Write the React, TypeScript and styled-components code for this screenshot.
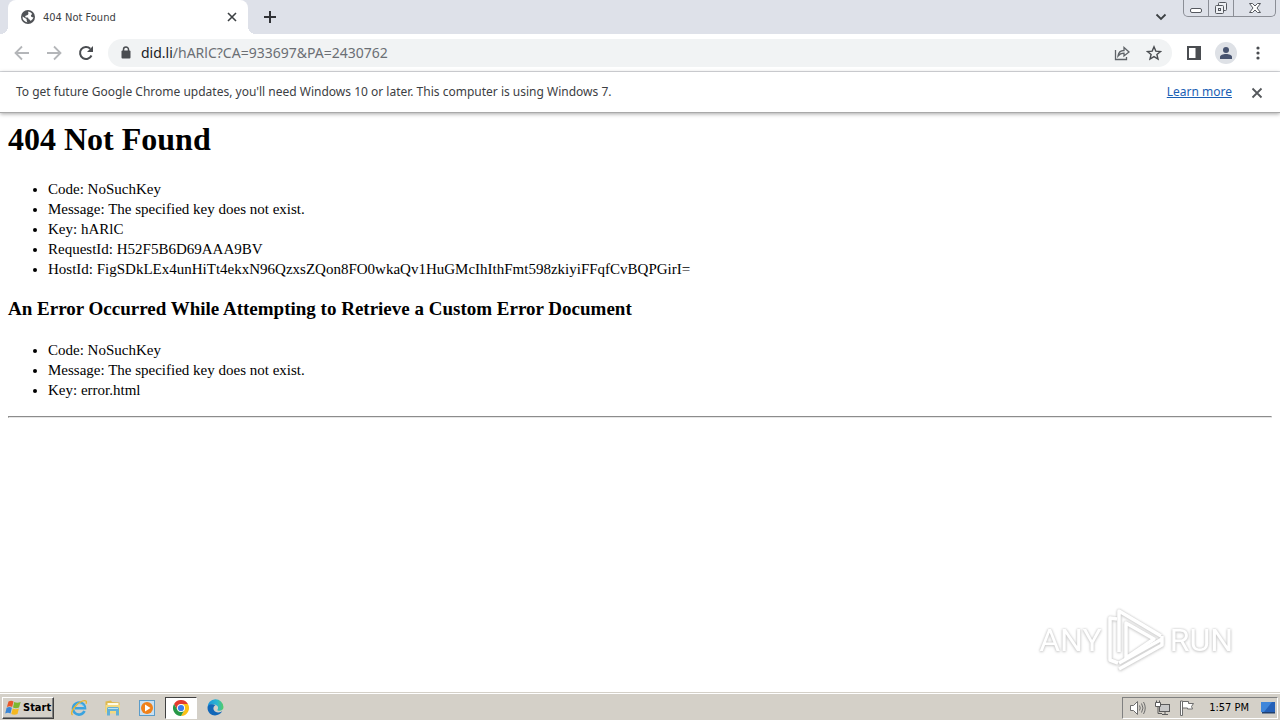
import React from 'react';
import styled, { createGlobalStyle, css } from 'styled-components';

const ui = '"Noto Sans", "DejaVu Sans Condensed", sans-serif';
const compact = '"DejaVu Sans Condensed", "DejaVu Sans", sans-serif';

const Global = createGlobalStyle`
  html, body, #root { height: 100%; }
  body { margin: 0; background: #fff; }
  *, *::before, *::after { box-sizing: border-box; }
  button { font: inherit; color: inherit; border: 0; padding: 0; background: none; }
  svg { display: block; flex: none; }
`;

const Desktop = styled.div`
  min-height: 100%;
  display: flex;
  flex-direction: column;
  font-family: ${ui};
`;

const TabStrip = styled.header`
  display: flex;
  height: 34px;
  padding-left: 8px;
  background: #dee1e9;
`;

const Tab = styled.div`
  position: relative;
  display: flex;
  align-items: center;
  gap: 8px;
  width: 240px;
  padding: 0 8px 0 13px;
  border-radius: 8px 8px 0 0;
  background: #fff;
  font-family: ${compact};
  font-size: 11px;
  color: #3c4043;
  &::before, &::after {
    content: '';
    position: absolute;
    bottom: 0;
    width: 8px;
    height: 8px;
  }
  &::before { left: -8px; background: radial-gradient(circle at 0 0, transparent 8px, #fff 8px); }
  &::after { right: -8px; background: radial-gradient(circle at 100% 0, transparent 8px, #fff 8px); }
`;

const TabTitle = styled.span`
  flex: 1;
`;

const IconButton = styled.button<{ $size?: number }>`
  display: grid;
  place-items: center;
  flex: none;
  width: ${p => p.$size ?? 16}px;
  height: ${p => p.$size ?? 16}px;
`;

const NewTab = styled(IconButton)`
  margin: 3px 0 0 8px;
`;

const StripEnd = styled.div`
  display: flex;
  align-items: flex-start;
  gap: 8px;
  margin-left: auto;
  padding-right: 4px;
`;

const TabSearch = styled(IconButton)`
  margin-top: 3px;
`;

const WindowButtons = styled.div`
  display: flex;
  height: 17px;
  border: 1px solid #8b8e96;
  border-top: 0;
  border-radius: 0 0 5px 5px;
`;

const WindowButton = styled.button<{ $width: number }>`
  display: grid;
  place-items: center;
  width: ${p => p.$width}px;
  & + & { border-left: 1px solid #8b8e96; }
`;

const Toolbar = styled.div`
  display: flex;
  align-items: center;
  height: 38px;
  padding: 0 10px;
  background: #fff;
  border-bottom: 1px solid #dadce0;
`;

const Group = styled.div`
  display: flex;
  gap: 8px;
`;

const AddressBar = styled.form`
  flex: 1;
  display: flex;
  align-items: center;
  gap: 7px;
  height: 28px;
  margin: 0 10px;
  padding: 0 6px 0 10px;
  border-radius: 14px;
  background: #f1f3f4;
`;

const Url = styled.span`
  flex: 1;
  font-size: 14px;
  line-height: 20px;
  color: #6b6f74;
`;

const Host = styled.span`
  color: #202124;
`;

const Avatar = styled.button`
  display: grid;
  place-items: center;
  width: 22px;
  height: 22px;
  border-radius: 50%;
  background: #dee1e6;
`;

const InfoBar = styled.section`
  position: relative;
  display: flex;
  align-items: center;
  height: 41px;
  padding: 0 16px;
  background: #fff;
  border-bottom: 1px solid #a9a9a9;
  box-shadow: 0 1px 4px rgba(0, 0, 0, 0.35);
  font-size: 12px;
  line-height: 16px;
  color: #3c4043;
`;

const InfoText = styled.span`
  flex: 1;
`;

const LearnMore = styled.a`
  margin-right: 16px;
  color: #1a5fb4;
  text-decoration: underline;
`;

const Page = styled.main`
  position: relative;
  flex: 1;
  padding: 8px;
  font-family: "Liberation Serif", serif;
  font-size: 15px;
  line-height: 20px;
  color: #000;
`;

const Title = styled.h1`
  margin: 0 0 21px;
  font-size: 32px;
  line-height: 37px;
`;

const Subtitle = styled.h3`
  margin: 19px 0 20px;
  font-size: 19px;
  line-height: 22px;
`;

const List = styled.ul`
  margin: 0;
  padding-left: 40px;
`;

const Rule = styled.hr`
  margin: 16px 0 0;
  border: 1px solid;
  border-color: #8c8c8c #e6e6e6 #e6e6e6 #8c8c8c;
`;

const Watermark = styled.div`
  position: absolute;
  right: 47px;
  bottom: 20px;
  display: flex;
  align-items: center;
  gap: 5px;
  font-family: Roboto, "Liberation Sans", sans-serif;
  font-size: 32px;
  line-height: 64px;
  color: #fff;
  filter: drop-shadow(0 0 1px #c4c4c4) drop-shadow(0 1px 1px #ddd);
`;

const Taskbar = styled.footer`
  display: flex;
  align-items: center;
  height: 28px;
  padding: 2px 2px 0;
  background: #d4d0c8;
  border-top: 1px solid #d4d0c8;
  box-shadow: inset 0 1px 0 #fff;
  font-family: ${compact};
  font-size: 11px;
  color: #000;
`;

const Start = styled.button`
  && {
    border: 1px solid;
    border-color: #fff #404040 #404040 #fff;
    padding: 0 2px;
    font-weight: 700;
  }
  display: flex;
  align-items: center;
  gap: 2px;
  height: 22px;
  margin-right: 9px;
  box-shadow: inset -1px -1px 0 #808080;
`;

const Task = styled.button<{ $active?: boolean }>`
  display: grid;
  place-items: center;
  width: 32px;
  height: 22px;
  margin-right: 2px;
  ${p => p.$active && css`
    && {
      background: #fff;
      border: 1px solid;
      border-color: #404040 #fff #fff #404040;
    }
  `}
`;

const Tray = styled.div`
  display: flex;
  align-items: center;
  gap: 8px;
  height: 22px;
  margin-left: auto;
  padding: 0 1px 0 6px;
  border: 1px solid;
  border-color: #808080 #fff #fff #808080;
`;

const Clock = styled.time`
  margin: 0 3px 0 6px;
`;

const Cross = ({ size = 16, color = '#3c4043' }: { size?: number; color?: string }) => (
  <svg width={size} height={size} viewBox="0 0 16 16">
    <path d="M4 4l8 8M12 4l-8 8" stroke={color} strokeWidth="1.6" />
  </svg>
);

const Arrow = ({ flip }: { flip?: boolean }) => (
  <svg width="16" height="16" viewBox="0 0 16 16" fill="none" stroke="#b4b6b9" strokeWidth="1.8">
    <path d={flip ? 'M1 8h13M8 1.5l6.5 6.5L8 14.5' : 'M15 8H2M8 1.5L1.5 8 8 14.5'} />
  </svg>
);

const WindowsFlag = () => (
  <svg width="16" height="16" viewBox="0 0 16 16">
    <path d="M3.500 1.500c2-1 3.500-1 5 0L7.200 7c-1.700-1-3.300-1-5.300 0z" fill="#e8572a" />
    <path d="M9.200 2c2 1 4 1 6.500 0L14 7.600c-2.200 1-4 1-6 0z" fill="#7db72f" />
    <path d="M1.600 7.800c2-1 3.600-1 5.300 0L5.500 13.500c-1.700-1-3.300-1-5.300 0z" fill="#3a86d6" />
    <path d="M7.700 8.400c2 1 4 1 6.200 0L12.500 14c-2.200 1-4.200 1-6.200 0z" fill="#f5b820" />
  </svg>
);

const Explorer = () => (
  <svg width="18" height="18" viewBox="0 0 18 18" fill="none">
    <path d="M14.500 12A6 6 0 1 1 15 9.300H5" stroke="#3ba3df" strokeWidth="2.600" />
    <path d="M14 8.200A5 5 0 0 0 5 7" stroke="#8dd3f5" strokeWidth="1" />
    <path d="M2.500 16C-.5 13.500 6 4.500 12.500 2c3.500-1.300 4.500.3 3.500 2.800" stroke="#e9b52c" strokeWidth="1.300" />
  </svg>
);

const Folder = () => (
  <svg width="18" height="18" viewBox="0 0 18 18">
    <path d="M1.500 2.500l5.500-1 1 1.500 7.500.5V13h-14z" fill="#dfb94e" />
    <path d="M3.500 4h11v3h-11z" fill="#fffbe4" />
    <path d="M1.500 6h14.500v8.500H1.500z" fill="#f3d980" />
    <path d="M3 9.500Q3 8 4.500 8h9Q15 8 15 9.500V16.500h-3V12H6v4.500H3z" fill="#63b0d6" />
    <path d="M4 9h10v1H4z" fill="#b9e2f2" />
  </svg>
);

const Player = () => (
  <svg width="18" height="18" viewBox="0 0 18 18">
    <rect x="1.500" y="1.500" width="15" height="15" fill="#c9e0f2" stroke="#5b9cc9" />
    <circle cx="9" cy="9" r="6" fill="#f0811a" />
    <path d="M7 5.500l5.500 3.500L7 12.500z" fill="#fff" />
  </svg>
);

const ChromeLogo = () => (
  <svg width="16" height="16" viewBox="0 0 16 16">
    <path d="M8 8V4h6.930A8 8 0 0 1 8 16l3.460-6z" fill="#fbc116" />
    <path d="M8 4h6.930A8 8 0 0 0 1.070 4L4.540 10 8 8z" fill="#e33b2e" />
    <path d="M1.070 4A8 8 0 0 0 8 16l3.460-6L8 8 4.540 10z" fill="#279847" />
    <circle cx="8" cy="8" r="4" fill="#fff" />
    <circle cx="8" cy="8" r="3.100" fill="#3b7ded" />
  </svg>
);

const EdgeLogo = () => (
  <svg width="17" height="17" viewBox="0 0 17 17">
    <defs>
      <linearGradient id="edgeTop" x1="0" x2="1"><stop stopColor="#1c93dc" /><stop offset="0.600" stopColor="#2bb5d0" /><stop offset="1" stopColor="#55ce62" /></linearGradient>
    </defs>
    <path d="M.5 8.500A8 8 0 0 1 16.500 8c0 2.500-1.800 3.800-4 3.800-1.800 0-2.600-.7-1.800-1.600C12 8.200 10 5.500 6.800 5.500 3.500 5.500.8 7.500.5 8.500z" fill="url(#edgeTop)" />
    <path d="M.5 8.500C1 5.500 5 4.300 8.500 6.200 5.500 7.500 5.200 13 11 13.500c2 .2 3.500-.8 4.200-1.200C12 18.500.5 18 .5 8.500z" fill="#1267b8" />
  </svg>
);

const Speaker = () => (
  <svg width="17" height="16" viewBox="0 0 17 16" fill="none" stroke="#6d6d6d">
    <path d="M1.500 5.500h3l4-4v13l-4-4h-3z" fill="#fff" />
    <path d="M10.500 5.500q1.500 2.500 0 5M12.500 3.500q3 4.500 0 9M14.500 2q3.500 6 0 12" />
  </svg>
);

const Network = () => (
  <svg width="17" height="16" viewBox="0 0 17 16" fill="#fff" stroke="#5b5b5b">
    <rect x="5.500" y="4.500" width="10" height="7" fill="#c8c8c8" />
    <path d="M8 14.500h6M11 12v2" />
    <path d="M4 6.500v7h4" fill="none" />
    <path d="M1.500 2.500h5v4h-5zM2.500.5v2M5.500.5v2" />
  </svg>
);

const ActionFlag = () => (
  <svg width="16" height="16" viewBox="0 0 16 16" fill="#fff" stroke="#6d6d6d">
    <path d="M1.500 1v14.500h2V10V1z" />
    <path d="M3.500 1.500h6v2h5l-2 3 1 2.500h-5V8h-5z" />
  </svg>
);

const ShowDesktop = () => (
  <svg width="16" height="14" viewBox="0 0 16 14">
    <path d="M1 1h14v10H1z" fill="#2561b8" />
    <path d="M1 1h11L4 11H1z" fill="#3f86da" />
    <path d="M2 11h13v1.500H2z" fill="#20406f" />
  </svg>
);

const PlayMark = () => (
  <svg width="58" height="64" viewBox="0 0 58 64" fill="none" stroke="#fff" strokeWidth="3.500" strokeLinejoin="round">
    <path d="M10 11l-7-1v42l8 3" />
    <path d="M12 44V3l42 25" />
    <path d="M19 50V15l28 16z" />
    <path d="M12 55l43-24M12 61l43-24v-9" />
  </svg>
);

const codes = ['Code: NoSuchKey', 'Message: The specified key does not exist.'];
const details = [
  ...codes,
  'Key: hARlC',
  'RequestId: H52F5B6D69AAA9BV',
  'HostId: FigSDkLEx4unHiTt4ekxN96QzxsZQon8FO0wkaQv1HuGMcIhIthFmt598zkiyiFFqfCvBQPGirI=',
];
const documentErrors = [...codes, 'Key: error.html'];

export default function App() {
  return (
    <Desktop>
      <Global />
      <TabStrip>
        <Tab>
          <svg width="14" height="14" viewBox="0 0 14 14">
            <circle cx="7" cy="7" r="7" fill="#505357" />
            <path d="M7.500 1.500c-1 1.500.8 2-.6 3.200-1 .8-2.400.3-2.700 1.700-.2 1 1 1 2.200 1.100 1.500.2.500 1.800 2 2 1.200.1.400 1.700 1.500 1.300A5.600 5.600 0 0 0 12.500 7c-1.300.6-2.500.1-2.600-1.200-.1-1 1.400-.8 1-2.200A5.600 5.600 0 0 0 7.500 1.500zM1.500 6.500c1.500.5 1.800 1.500 3.300 1.900 1.600.4.200 2.300 1.900 4.100A5.600 5.600 0 0 1 1.500 6.500z" fill="#fff" />
          </svg>
          <TabTitle>404 Not Found</TabTitle>
          <IconButton aria-label="Close tab"><Cross /></IconButton>
        </Tab>
        <NewTab $size={28} aria-label="New tab">
          <svg width="14" height="14" viewBox="0 0 14 14"><path d="M7 1v12M1 7h12" stroke="#303236" strokeWidth="2" /></svg>
        </NewTab>
        <StripEnd>
          <TabSearch $size={28} aria-label="Search tabs">
            <svg width="12" height="8" viewBox="0 0 12 8"><path d="M1.500 1.500L6 6l4.500-4.500" fill="none" stroke="#3c4043" strokeWidth="1.800" /></svg>
          </TabSearch>
          <WindowButtons>
            <WindowButton $width={24} aria-label="Minimize">
              <svg width="14" height="16" viewBox="0 0 14 16"><rect x="1.500" y="8.500" width="11" height="4" rx="1.500" fill="#fff" stroke="#55585f" /></svg>
            </WindowButton>
            <WindowButton $width={25} aria-label="Restore">
              <svg width="14" height="14" viewBox="0 0 14 14" fill="#eef0f4" stroke="#55585f">
                <rect x="4.500" y="1.500" width="8" height="8" rx="1" />
                <rect x="1.500" y="4.500" width="8" height="8" rx="1" />
                <rect x="4.500" y="7.500" width="2" height="2" />
              </svg>
            </WindowButton>
            <WindowButton $width={42} aria-label="Close">
              <svg width="14" height="14" viewBox="0 0 14 14"><path d="M1.500 2.500h3L7 5l2.500-2.500h3L9 7l3.500 4.500h-3L7 9l-2.500 2.500h-3L5 7z" fill="#fff" stroke="#55585f" /></svg>
            </WindowButton>
          </WindowButtons>
        </StripEnd>
      </TabStrip>
      <Toolbar>
        <Group>
          <IconButton $size={24} aria-label="Back"><Arrow /></IconButton>
          <IconButton $size={24} aria-label="Forward"><Arrow flip /></IconButton>
          <IconButton $size={24} aria-label="Reload">
            <svg width="16" height="16" viewBox="0 0 16 16"><path d="M13.500 10.500A6 6 0 1 1 12.300 3.700" fill="none" stroke="#4a4d51" strokeWidth="2" /><path d="M15 1v6H9z" fill="#4a4d51" /></svg>
          </IconButton>
        </Group>
        <AddressBar>
          <svg width="16" height="16" viewBox="0 0 16 16"><rect x="3.500" y="5.500" width="9" height="8" rx="1" fill="#4a4d51" /><path d="M5.500 6V4.500a2.500 2.500 0 0 1 5 0V6" fill="none" stroke="#4a4d51" strokeWidth="1.500" /></svg>
          <Url><Host>did.li</Host>/hARlC?CA=933697&amp;PA=2430762</Url>
          <Group>
            <IconButton $size={24} type="button" aria-label="Share">
              <svg width="16" height="16" viewBox="0 0 16 16" fill="none" stroke="#5f6368" strokeWidth="1.300"><path d="M1.500 5v9.500h11V12M4 11c.5-4 2.500-5.500 6-5.500V2.500L15 7l-5 4V8.200C7.500 8.200 5.500 9 4 11z" /></svg>
            </IconButton>
            <IconButton $size={24} type="button" aria-label="Bookmark this page">
              <svg width="16" height="16" viewBox="0 0 16 16" fill="none" stroke="#4a4d51" strokeWidth="1.400"><path d="M8 1.800l1.800 4.300 4.700.4-3.600 3 1.100 4.600L8 11.600l-4 2.500 1.100-4.600-3.600-3 4.700-.4z" /></svg>
            </IconButton>
          </Group>
        </AddressBar>
        <Group>
          <IconButton $size={24} aria-label="Side panel">
            <svg width="14" height="14" viewBox="0 0 14 14"><path d="M1 1h12v12H1z" fill="none" stroke="#4a4d51" strokeWidth="2" /><path d="M8.500 1H13v12H8.500z" fill="#4a4d51" /></svg>
          </IconButton>
          <IconButton as="div" $size={24}>
            <Avatar aria-label="Profile">
              <svg width="12" height="12" viewBox="0 0 12 12" fill="#47536f"><circle cx="6" cy="3" r="3" /><path d="M0 12V10c0-2 3-3 6-3s6 1 6 3v2z" /></svg>
            </Avatar>
          </IconButton>
          <IconButton $size={24} aria-label="Menu">
            <svg width="4" height="14" viewBox="0 0 4 14" fill="#4a4d51"><circle cx="2" cy="2" r="1.600" /><circle cx="2" cy="7" r="1.600" /><circle cx="2" cy="12" r="1.600" /></svg>
          </IconButton>
        </Group>
      </Toolbar>
      <InfoBar>
        <InfoText>To get future Google Chrome updates, you'll need Windows 10 or later. This computer is using Windows 7.</InfoText>
        <LearnMore href="#">Learn more</LearnMore>
        <IconButton aria-label="Dismiss"><Cross size={18} color="#55585c" /></IconButton>
      </InfoBar>
      <Page>
        <Title>404 Not Found</Title>
        <List>{details.map(d => <li key={d}>{d}</li>)}</List>
        <Subtitle>An Error Occurred While Attempting to Retrieve a Custom Error Document</Subtitle>
        <List>{documentErrors.map(d => <li key={d}>{d}</li>)}</List>
        <Rule />
        <Watermark>
          <span>ANY</span>
          <PlayMark />
          <span>RUN</span>
        </Watermark>
      </Page>
      <Taskbar>
        <Start><WindowsFlag />Start</Start>
        <Task aria-label="Internet Explorer"><Explorer /></Task>
        <Task aria-label="File Explorer"><Folder /></Task>
        <Task aria-label="Media Player"><Player /></Task>
        <Task $active aria-label="Chrome"><ChromeLogo /></Task>
        <Task aria-label="Edge"><EdgeLogo /></Task>
        <Tray>
          <Speaker />
          <Network />
          <ActionFlag />
          <Clock>1:57 PM</Clock>
          <ShowDesktop />
        </Tray>
      </Taskbar>
    </Desktop>
  );
}
